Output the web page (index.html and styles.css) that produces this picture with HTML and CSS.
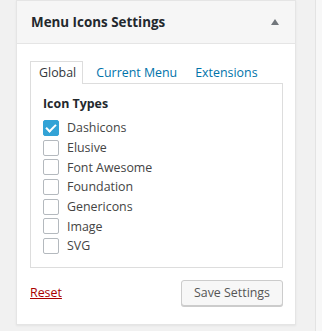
FILE: index.html
```html
<!DOCTYPE html>
<html lang="en">
<head>
    <meta charset="UTF-8">
    <title>Menu Icons Settings</title>
    <link rel="stylesheet" href="styles.css">
</head>
<body>
    <div class="sidebar">
        <div class="panel">
            <div class="panel-header">
                <h2>Menu Icons Settings</h2>
                <span class="toggle"></span>
            </div>
            <div class="panel-body">
                <div class="tabs">
                    <a class="tab active">Global</a>
                    <a class="tab">Current Menu</a>
                    <a class="tab">Extensions</a>
                </div>
                <div class="tab-content">
                    <h3>Icon Types</h3>
                    <label class="option"><span class="check checked"></span>Dashicons</label>
                    <label class="option"><span class="check"></span>Elusive</label>
                    <label class="option"><span class="check"></span>Font Awesome</label>
                    <label class="option"><span class="check"></span>Foundation</label>
                    <label class="option"><span class="check"></span>Genericons</label>
                    <label class="option"><span class="check"></span>Image</label>
                    <label class="option"><span class="check"></span>SVG</label>
                </div>
                <div class="actions">
                    <a class="reset">Reset</a>
                    <button class="save-button">Save Settings</button>
                </div>
            </div>
        </div>
    </div>
    <div class="rest"></div>
</body>
</html>
```

FILE: styles.css
```css
body {
    margin: 0;
    height: 100vh;
    display: flex;
    background-color: #f7f7f7;
    font-family: 'Open Sans', sans-serif;
    font-size: 12.4px;
    color: #444;
    overflow: hidden;
}

.sidebar {
    width: 316px;
    background-color: #f1f1f1;
    border-right: 1px solid #e3e3e3;
    padding-left: 16px;
    box-sizing: border-box;
}

.rest {
    flex: 1;
}

.panel {
    width: 280px;
    background-color: #fff;
    border: 1px solid #e5e5e5;
    box-shadow: 0 1px 2px rgba(0, 0, 0, 0.06);
    box-sizing: border-box;
}

.panel-header {
    height: 42px;
    display: flex;
    align-items: center;
    justify-content: space-between;
    padding: 0 14px 0 14px;
    background-color: #f6f6f6;
    border-bottom: 1px solid #e5e5e5;
}

.panel-header h2 {
    margin: 0;
    font-size: 13.4px;
    font-weight: bold;
    color: #23282d;
}

.toggle {
    width: 0;
    height: 0;
    border-left: 4px solid transparent;
    border-right: 4px solid transparent;
    border-bottom: 6px solid #72777c;
    margin-right: 2px;
}

.panel-body {
    padding: 17px 12px 18px 13px;
}

.tabs {
    display: flex;
    height: 23px;
    white-space: nowrap;
}

.tab {
    padding: 0 6px 0 8px;
    margin-right: 2px;
    line-height: 22px;
    color: #0073aa;
    border: 1px solid transparent;
    border-bottom: none;
}

.tab.active {
    color: #32373c;
    border-color: #ddd;
    background-color: #fff;
    position: relative;
    margin-right: 4px;
    z-index: 1;
}

.tab-content {
    border: 1px solid #ddd;
    margin-top: -1px;
    padding: 11px 12px 11px 12px;
}

.tab-content h3 {
    margin: 0 0 5px 0;
    font-size: 12.4px;
    font-weight: bold;
    color: #23282d;
    line-height: 18px;
}

.option {
    display: flex;
    align-items: center;
    height: 19.7px;
    color: #444;
}

.check {
    width: 16px;
    height: 16px;
    box-sizing: border-box;
    border: 1px solid #b4b9be;
    border-radius: 2px;
    background-color: #fff;
    margin-right: 8px;
    position: relative;
}

.check.checked {
    background-color: #33a3d6;
    border-color: #33a3d6;
}

.check.checked::after {
    content: "";
    position: absolute;
    left: 4px;
    top: 1px;
    width: 4px;
    height: 8px;
    border-right: 2px solid #fff;
    border-bottom: 2px solid #fff;
    transform: rotate(45deg);
}

.actions {
    display: flex;
    justify-content: space-between;
    align-items: center;
    margin-top: 12px;
}

.reset {
    color: #a00;
    text-decoration: underline;
}

.save-button {
    font-family: 'Open Sans', sans-serif;
    font-size: 12.4px;
    color: #555;
    height: 26px;
    padding: 0 12px;
    background-color: #f7f7f7;
    border: 1px solid #ccc;
    border-radius: 3px;
    box-shadow: 0 1px 0 #ccc;
}
```
